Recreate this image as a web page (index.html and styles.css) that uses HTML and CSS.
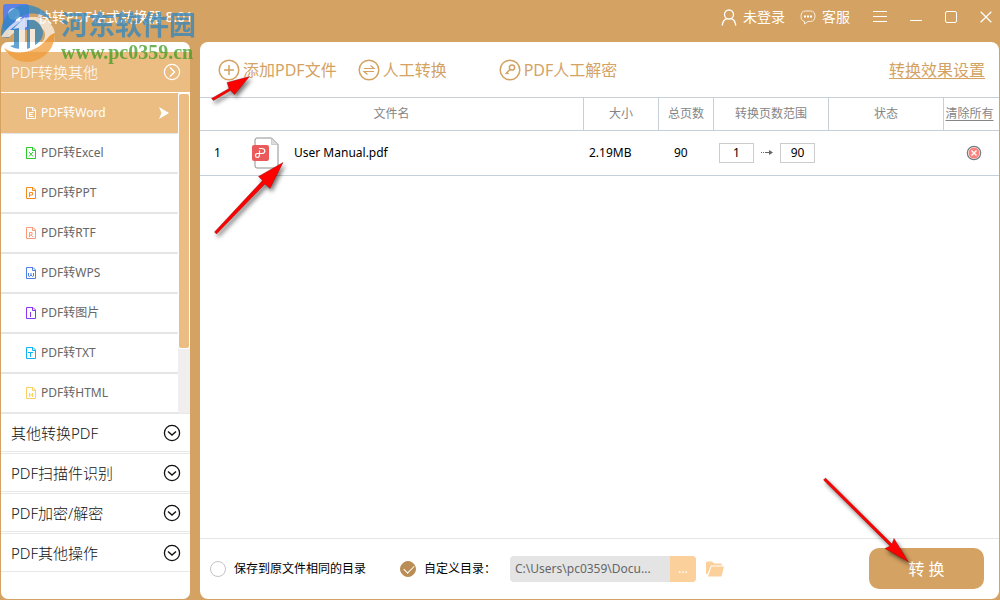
FILE: index.html
```html
<!DOCTYPE html>
<html lang="zh-CN">
<head>
<meta charset="utf-8">
<title>快转PDF格式转换器 8.01</title>
<link rel="stylesheet" href="styles.css">
</head>
<body>
<svg class="defs" aria-hidden="true">
  <defs>
    <symbol id="doc" viewBox="0 0 10 12"><path d="M.5.5H7L9.500 3v8.500H.5zM6.500.5v3h3" fill="none" stroke="currentColor"/></symbol>
    <symbol id="down" viewBox="0 0 18 18"><circle cx="9" cy="9" r="7.600" fill="none" stroke="currentColor" stroke-width="1.300"/><path d="M5 7.500 9 11l4-3.500" fill="none" stroke="currentColor" stroke-width="1.400"/></symbol>
  </defs>
</svg>
<div class="app">
  <header class="titlebar">
    <svg class="app-icon" viewBox="0 0 26 26" aria-hidden="true"><rect width="26" height="26" rx="3" fill="#5d80e6"/><circle cx="11" cy="10" r="6" fill="#b7d2f6"/><path d="m15 10 1.200 2.800 3 .2-2.300 2 .8 3-2.700-1.600-2.700 1.600.8-3-2.300-2 3-.2z" fill="#fff"/></svg>
    <h1 class="app-title">快转PDF格式转换器 8.01</h1>
    <nav class="window-tools" aria-label="窗口">
      <button class="tool account"><svg width="16" height="17" viewBox="0 0 16 17"><g fill="none" stroke="currentColor" stroke-width="1.300"><circle cx="8" cy="5.500" r="4.500"/><path d="M1.300 16.500c.3-4 2-6 4.500-6.800M14.700 16.500c-.3-4-2-6-4.500-6.800"/></g></svg>未登录</button>
      <button class="tool service"><svg width="16" height="15" viewBox="0 0 16 15"><path d="M5.500 1h5C13.500 1 15 3 15 6s-1.500 5.500-4.500 5.500H8L4.500 14v-2.500C2 11 1 9 1 6.300 1 3 2.500 1 5.500 1z" fill="none" stroke="currentColor" stroke-opacity=".8"/><path d="M4 5.500h2v2H4zm3 0h2v2H7zm3 0h2v2h-2z" fill="currentColor"/></svg>客服</button>
      <button class="tool" aria-label="菜单"><svg width="14" height="12" viewBox="0 0 14 12"><path d="M0 .5h14M0 5.500h14M0 10.500h14" stroke="currentColor"/></svg></button>
      <button class="tool" aria-label="最小化"><svg width="12" height="12" viewBox="0 0 12 12"><path d="M0 9.500h12" stroke="currentColor"/></svg></button>
      <button class="tool" aria-label="最大化"><svg width="12" height="12" viewBox="0 0 12 12"><rect x=".5" y=".5" width="11" height="11" rx="1.500" fill="none" stroke="currentColor"/></svg></button>
      <button class="tool" aria-label="关闭"><svg width="12" height="12" viewBox="0 0 12 12"><path d="m.7.7 10.600 10.600M11.300.7.7 11.300" stroke="currentColor" stroke-width="1.300"/></svg></button>
    </nav>
  </header>

  <div class="body">
    <aside class="sidebar">
      <button class="group open">PDF转换其他<svg class="chev" viewBox="0 0 18 18"><circle cx="9" cy="9" r="7.600" fill="none" stroke="currentColor" stroke-width="1.200"/><path d="M7 4.500 11.500 9 7 13.500" fill="none" stroke="currentColor" stroke-width="1.400"/></svg></button>
      <div class="list-wrap">
        <ul class="list">
          <li><button class="item current"><svg class="doc" viewBox="0 0 10 12"><use href="#doc"/><path d="M7.500 5.500H3.500v4h4M3.500 7.500h3" fill="none" stroke="currentColor"/></svg>PDF转Word<svg class="pointer" viewBox="0 0 10 12"><path d="m0 0 10 6-10 6 2.500-6z" fill="currentColor"/></svg></button></li>
          <li><button class="item"><svg class="doc excel" viewBox="0 0 10 12"><use href="#doc"/><path d="m3 5 4 4.500M7 5 3 9.500" stroke="currentColor"/></svg>PDF转Excel</button></li>
          <li><button class="item"><svg class="doc ppt" viewBox="0 0 10 12"><use href="#doc"/><path d="M3.500 10V5.500h3v2.500h-3" fill="none" stroke="currentColor"/></svg>PDF转PPT</button></li>
          <li><button class="item"><svg class="doc rtf" viewBox="0 0 10 12"><use href="#doc"/><path d="M3.500 10V5.500h2.500V8H3.500M5 8l2 2" fill="none" stroke="currentColor"/></svg>PDF转RTF</button></li>
          <li><button class="item"><svg class="doc wps" viewBox="0 0 10 12"><use href="#doc"/><path d="M2.500 6v3l1 .5L5 8l1.500 1.500 1-.5V6M5 6v2" fill="none" stroke="currentColor"/></svg>PDF转WPS</button></li>
          <li><button class="item"><svg class="doc img" viewBox="0 0 10 12"><use href="#doc"/><path d="M4.500 5v5" stroke="currentColor"/></svg>PDF转图片</button></li>
          <li><button class="item"><svg class="doc txt" viewBox="0 0 10 12"><use href="#doc"/><path d="M2 5.500h5M4.500 5.500V10" stroke="currentColor"/></svg>PDF转TXT</button></li>
          <li><button class="item"><svg class="doc html" viewBox="0 0 10 12"><use href="#doc"/><path d="M3.500 6v4M6.500 6v4M3.500 8h3" stroke="currentColor"/></svg>PDF转HTML</button></li>
        </ul>
        <div class="scroll"><div class="thumb"></div></div>
      </div>
      <button class="group">其他转换PDF<svg class="chev"><use href="#down"/></svg></button>
      <button class="group">PDF扫描件识别<svg class="chev"><use href="#down"/></svg></button>
      <button class="group">PDF加密/解密<svg class="chev"><use href="#down"/></svg></button>
      <button class="group">PDF其他操作<svg class="chev"><use href="#down"/></svg></button>
    </aside>

    <main class="main">
      <div class="toolbar">
        <button class="action"><svg viewBox="0 0 22 22"><circle cx="11" cy="11" r="9.800"/><path d="M6 11h10M11 6v10"/></svg>添加PDF文件</button>
        <button class="action wide"><svg viewBox="0 0 22 22"><circle cx="11" cy="11" r="9.800"/><path d="M6 9.500h10L12.500 6.500M16 12.500H6l3.500 3" stroke-width="1.200"/></svg>人工转换</button>
        <button class="action"><svg viewBox="0 0 22 22"><circle cx="11" cy="11" r="9.800"/><circle cx="13" cy="8.500" r="2.600"/><path d="m11 10.500-4.500 4.500M8 13.500l1.500 1.500"/></svg>PDF人工解密</button>
        <a class="settings" href="#settings">转换效果设置</a>
      </div>

      <table class="files">
        <colgroup><col><col class="c-size"><col class="c-pages"><col class="c-range"><col class="c-state"><col class="c-clear"></colgroup>
        <thead><tr><th>文件名</th><th>大小</th><th>总页数</th><th>转换页数范围</th><th>状态</th><th><a href="#clear">清除所有</a></th></tr></thead>
        <tbody><tr>
          <td><div class="file"><span class="index">1</span>
            <svg class="pdf" viewBox="0 0 27 32" aria-hidden="true"><path d="M5 1h14.500L26 7.500V29q0 2-2 2H5q-2 0-2-2V3q0-2 2-2z" fill="#fff" stroke="#8f8f8f"/><path d="M19.500 1v6.500H26z" fill="#ddd" stroke="#aaa" stroke-width=".5"/><rect y="8" width="17" height="16" rx="2" fill="#eb5a5a"/><path d="M7 11.500h2.500c4.500 0 4.500 5 0 5H5.500c-3 0-2.500 4 0 4 2 0 2-1.500 2-4v-3" fill="none" stroke="#fff" stroke-width="1.200"/></svg>
            User Manual.pdf</div></td>
          <td class="size">2.19MB</td>
          <td class="pages">90</td>
          <td><div class="range"><input aria-label="起始页" value="1"><svg width="14" height="8" viewBox="0 0 14 8"><path d="M1 3.500h1M3 3.500h1M5 3.500h6" stroke="#666"/><path d="m9 1 4 2.500L9 6z" fill="#666"/></svg><input aria-label="结束页" value="90"></div></td>
          <td></td>
          <td class="remove-cell"><button class="remove" aria-label="删除"><svg width="16" height="16" viewBox="0 0 16 16"><circle cx="8" cy="8" r="6.700" fill="#fff" stroke="#747b84" stroke-width="1.200"/><circle cx="8" cy="8" r="5.500" fill="#fb827d"/><path d="m5.500 5.500 5 5m0-5-5 5" stroke="#fff" stroke-width="1.400"/></svg></button></td>
        </tr></tbody>
      </table>

      <footer class="footer">
        <label class="choice same"><input type="radio" name="dir">保存到原文件相同的目录</label>
        <label class="choice"><input type="radio" name="dir" checked>自定义目录：</label>
        <div class="path"><input aria-label="目录" value="C:\Users\pc0359\Docu..." readonly><button aria-label="浏览">...</button></div>
        <button class="folder" aria-label="打开目录"><svg width="18" height="16" viewBox="0 0 18 16"><path d="M0 13V2q0-1.500 1.500-1.500H6L8 2.500h7q1 0 1 2H5L1.500 13z" fill="#fbd09b"/><path d="M5.500 5.500H18L15.500 15.500H2z" fill="#fbd09b"/></svg></button>
        <button class="convert">转 换</button>
      </footer>
    </main>
  </div>

  <div class="watermark">
    <svg viewBox="0 0 56 62" aria-hidden="true">
      <path d="M1 37C0 17 13 4 28 5c10 1 19 7 23 15-10-8-24-9-34-1C9 25 8 32 9 38z" fill="#2f86c3"/>
      <path d="M1 37C8 25 20 16 33 17c13 0 22 8 22 18C55 49 42 61 27 61 16 61 7 55 3 47 17 57 46 49 45 34 44 23 24 23 9 37z" fill="#fff" fill-opacity=".88"/>
      <path d="M4 48c9 7 30 7 43-9 3-4 5-5 8-6C55 50 42 62 27 62 17 62 8 56 4 48z" fill="#f19b38"/>
      <path d="M10 30 22 20v29c-5 0-9-1-12-3l4-1V30z" fill="#2f86c3"/>
      <path d="M27 20h7c6 3 9 8 9 14-1 7-7 12-16 15z" fill="#2f86c3"/>
      <path d="M13 29 25 17v32h-6V28z" fill="#fff"/>
      <path d="M30 29v20l5-3V29z" fill="#fff"/>
    </svg>
    <div class="mark-text"><span class="mark-name">河东软件园</span><span class="mark-url">www.pc0359.cn</span></div>
  </div>

  <svg class="arrows" viewBox="0 0 1000 600" aria-hidden="true">
    <g fill="#f00" stroke="#7a1010" stroke-width=".4">
      <path d="m211.500 98.500 17.500-10-2-6 22.500-6-15 18-4-4-17 10z"/>
      <path d="m214.500 232 48-51.500-4-4 24.500-14-13 26-5-4.500-48.500 50z"/>
      <path d="m825.500 478 66.500 66 2-5.500L908.500 562 885 548.500l5-2.500-66.500-66z"/>
    </g>
  </svg>
</div>
</body>
</html>
```
FILE: styles.css
```css
* { box-sizing: border-box; }
body {
  margin: 0;
  color: #000;
  font: 12px/20px "Noto Sans", "Noto Sans CJK SC", sans-serif;
}
button, input { margin: 0; padding: 0; border: 0; background: none; color: inherit; font: inherit; }
h1, ul { margin: 0; padding: 0; }
ul { list-style: none; }
svg { display: block; flex: none; }
.defs { position: absolute; width: 0; height: 0; }

.app {
  position: relative;
  display: flex;
  flex-direction: column;
  min-height: 100vh;
  padding: 0 1px 1px;
  overflow: hidden;
  background: #d4a262;
}

.titlebar {
  display: flex;
  align-items: flex-start;
  height: 42px;
  padding: 4px 7px 0 2px;
  color: #fff;
}
.app-icon { width: 26px; height: 26px; }
.app-title { margin-left: 9px; padding-top: 3px; font-size: 14px; font-weight: 400; white-space: nowrap; }
.window-tools { display: flex; align-items: center; gap: 23px; margin-left: auto; height: 26px; }
.tool { display: flex; align-items: center; gap: 6px; font-size: 14px; }
.account { margin-right: -8px; }

.body { display: flex; flex: 1; gap: 10px; }
.sidebar {
  display: flex;
  flex-direction: column;
  flex: none;
  width: 189px;
  padding-top: 10px;
  border-radius: 7px;
  background: #fff;
}
.group {
  display: flex;
  align-items: center;
  justify-content: space-between;
  height: 39px;
  margin-bottom: 1px;
  padding: 0 9px 0 10px;
  border-top: 1px solid #e8e8e8;
  border-bottom: 1px solid #e8e8e8;
  color: #111;
  font-size: 15px;
  font-weight: 300;
}
.group.open { height: 40px; border: 0; background: #ebbd82; color: #fff; }
.chev { width: 18px; height: 18px; }
.list-wrap { display: flex; }
.list { flex: 1; }
.item {
  display: flex;
  align-items: center;
  width: 100%;
  height: 40px;
  padding: 0 9px 0 25px;
  border-bottom: 2px solid #e6e6e6;
  color: #666;
}
.item.current { border-bottom-width: 1px; background: #ebbd82; color: #fff; height: 41px; }
li:last-child .item { height: 39px; border-bottom-width: 1px; }
.doc { width: 10px; height: 12px; margin-right: 5px; }
.pointer { width: 10px; height: 12px; margin-left: auto; }
.excel { color: #2cc92c; }
.ppt { color: #f58a1f; }
.rtf { color: #fb9a76; }
.wps { color: #4f7fe0; }
.img { color: #8b35f0; }
.txt { color: #10b4f5; }
.html { color: #fbd062; }
.scroll { width: 12px; padding: 1px; background: #f0eeef; }
.thumb { height: 80%; border-radius: 2px; background: #ebbd82; box-shadow: 0 0 0 1px #fff; }

.main {
  display: flex;
  flex-direction: column;
  flex: 1;
  min-width: 0;
  border-radius: 8px;
  background: #fff;
}
.toolbar { display: flex; align-items: center; height: 55px; padding: 0 14px 0 18px; }
.action {
  display: flex;
  align-items: center;
  gap: 3px;
  margin-right: 21px;
  color: #d4a262;
  font-size: 16px;
}
.action.wide { margin-right: 52px; }
.action svg { width: 22px; height: 22px; fill: none; stroke: currentColor; stroke-width: 1.5; }
.settings { margin-left: auto; color: #d4a262; font-size: 16px; text-underline-offset: 2px; }

.files { width: 100%; table-layout: fixed; border-collapse: separate; border-spacing: 0; }
.c-size { width: 75px; }
.c-pages { width: 55px; }
.c-range, .c-state { width: 115px; }
.c-clear { width: 55px; }
th {
  height: 34px;
  padding: 0;
  border: solid #c6d0d9;
  border-width: 1px 1px 1px 0;
  color: #858585;
  font-weight: 400;
  white-space: nowrap;
}
th:last-child { padding-right: 4px; border-right: 0; }
th a { color: inherit; text-underline-offset: 2px; }
td { height: 45px; padding: 0; border-bottom: 1px solid #c6d0d9; }
.file { display: flex; align-items: center; padding-left: 14px; }
.index { width: 38px; }
.pdf { width: 27px; height: 32px; margin-right: 15px; }
.size { padding-left: 5px; }
.pages { padding-left: 15px; }
.range { display: flex; align-items: center; gap: 6px; padding-left: 5px; }
.range input { width: 35px; height: 20px; border: 1px solid #ccc; text-align: center; }
.remove-cell { padding-left: 22px; }
.remove { display: block; }

.footer {
  display: flex;
  align-items: center;
  height: 61px;
  margin-top: auto;
  padding: 0 15px 1px 10px;
  border-top: 1px solid #e5e5e5;
}
.choice { display: flex; align-items: center; gap: 8px; }
.same { margin-right: 34px; }
.choice input {
  position: relative;
  width: 16px;
  height: 16px;
  border: 1px solid #c4c4c4;
  border-radius: 50%;
  appearance: none;
}
.choice input:checked { border-color: #b98d55; background: #b98d55; }
.choice input:checked::after {
  content: "";
  position: absolute;
  top: 3px;
  left: 3px;
  width: 9px;
  height: 5px;
  border: solid #fff;
  border-width: 0 0 1px 1px;
  transform: rotate(-45deg);
}
.path { display: flex; width: 186px; height: 26px; margin-left: 14px; overflow: hidden; border-radius: 4px; background: #e4e4e4; color: #666; }
.path input { flex: 1; min-width: 0; padding: 0 5px; }
.path button { width: 26px; background: #fbd09b; color: #fff; }
.folder { margin-left: 10px; }
.convert {
  width: 115px;
  height: 41px;
  margin-left: auto;
  border-radius: 10px;
  background: #d4a262;
  color: #fff;
  font-size: 16px;
}

.watermark { position: absolute; top: 0; left: 0; display: flex; gap: 5px; opacity: .75; pointer-events: none; }
.watermark svg { width: 56px; height: 62px; }
.mark-text { display: flex; flex-direction: column; padding-top: 8px; }
.mark-name { color: #2f86c3; font-size: 27px; font-weight: 700; line-height: 34px; }
.mark-url { color: #3f9c20; font: 700 20px/20px "Liberation Serif", serif; }
.arrows { position: absolute; top: 0; left: 0; width: 1000px; height: 600px; filter: drop-shadow(2px 3px 2px #0008); pointer-events: none; }
```
